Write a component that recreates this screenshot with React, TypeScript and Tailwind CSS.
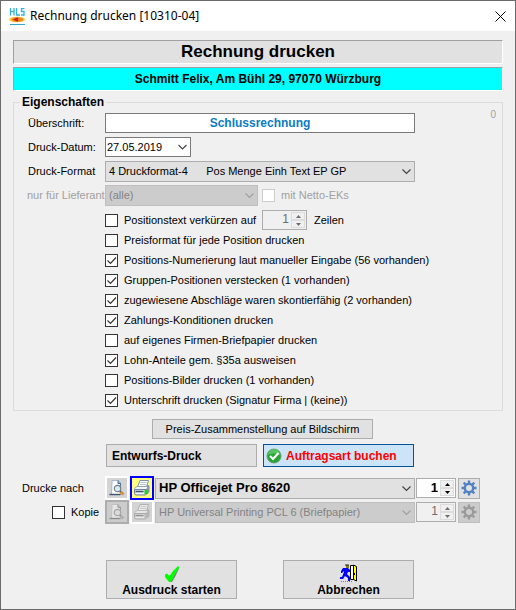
import { useState } from 'react';
import type { ReactNode } from 'react';

const printOptions = [
    { label: 'Preisformat für jede Position drucken', checked: false },
    { label: 'Positions-Numerierung laut manueller Eingabe (56 vorhanden)', checked: true },
    { label: 'Gruppen-Positionen verstecken (1 vorhanden)', checked: true },
    { label: 'zugewiesene Abschläge waren skontierfähig (2 vorhanden)', checked: true },
    { label: 'Zahlungs-Konditionen drucken', checked: true },
    { label: 'auf eigenes Firmen-Briefpapier drucken', checked: false },
    { label: 'Lohn-Anteile gem. §35a ausweisen', checked: true },
    { label: 'Positions-Bilder drucken (1 vorhanden)', checked: false },
    { label: 'Unterschrift drucken (Signatur Firma | (keine))', checked: true },
];

function Logo() {
    return (
        <svg className="h-[17px] w-4" viewBox="0 0 16 17" fill="none">
            <path d="M1.500 0v7.500M5 0v7.500M1.500 3.500H5M7.500 0v7H11M15.500 .500h-3v3h2.500v3.500h-3" stroke="#35b4d6" strokeWidth="1.300" />
            <ellipse cx="8" cy="11.500" rx="8" ry="2.800" fill="#f9d030" />
            <ellipse cx="8.500" cy="11.500" rx="6" ry="2.300" fill="#f08a1c" />
            <path d="M4 11.500l4.500-2.300 1 1.300-1 1 1 1-1 1.300z" fill="#d11c1c" />
            <path d="M1 16.500h15" stroke="#35a3cf" />
        </svg>
    );
}

function PreviewIcon() {
    return (
        <svg className="size-4" viewBox="0 0 16 16" fill="none">
            <path d="M3 .5h6.500l2 2.500v11.500H2.500z" fill="#fdfeff" stroke="#a3b8cc" />
            <path d="M9 .5V3.500h3" fill="#8fb2d6" stroke="#47678b" />
            <path d="M11.500 3.500v6" stroke="#5a7494" />
            <path d="M.5 14.500h11" stroke="#3e5470" strokeWidth="1.400" />
            <path d="M11 11.500l3.500 3" stroke="#d98a3a" strokeWidth="2.800" />
            <path d="M10.500 10.500l1.500 1.200" stroke="#5f5146" strokeWidth="1.500" />
            <circle cx="8.500" cy="8.500" r="3.200" fill="#d5ebf8" stroke="#75818c" strokeWidth="1.200" />
        </svg>
    );
}

function PrinterIcon() {
    return (
        <svg className="size-4" viewBox="0 0 16 16" fill="none">
            <path d="M6 .5h8.500l-2 6.500H3.500z" fill="#fff" stroke="#7b94ad" />
            <path d="M6.500 2.500h6M6 4.500h6" stroke="#b4c6d8" />
            <path d="M13 4l2.500 2v6l-3 3z" fill="#8796a6" />
            <path d="M.5 8.500L3 6.500h11l-1.500 3H.5z" fill="#f4f7fa" stroke="#93a3b3" />
            <path d="M.5 9.500h12V14l-1 1H1.500l-1-1.500z" fill="#d8e0e8" stroke="#74879a" />
            <path d="M1.500 11.500h8" stroke="#41566d" strokeWidth="1.400" />
            <path d="M2 13.500h8" stroke="#fff" />
            <path d="M10.500 10h3v4h-3z" fill="#24d324" />
        </svg>
    );
}

function GearIcon() {
    return (
        <svg className="size-4" viewBox="0 0 16 16" fill="none" stroke="currentColor">
            <circle cx="8" cy="8" r="4.200" strokeWidth="2.400" />
            <path d="M8 .5v2.500M8 13v2.500M.5 8h2.500M13 8h2.500M2.700 2.700l1.800 1.800M11.500 11.500l1.800 1.800M13.300 2.700l-1.800 1.800M4.500 11.500l-1.800 1.800" strokeWidth="2.400" />
        </svg>
    );
}

function OkBallIcon() {
    return (
        <svg className="size-4" viewBox="0 0 16 16" fill="none">
            <circle cx="8" cy="8" r="7" fill="#22a531" stroke="#6d9a70" />
            <path d="M2 7a6 6 0 0 1 12 0c-3-2-8-2-12 0z" fill="#55c35f" />
            <path d="M4 8l3 3 5.500-6" stroke="#fff" strokeWidth="2.200" />
        </svg>
    );
}

function GreenCheckIcon() {
    return (
        <svg className="h-4 w-4" viewBox="0 0 16 16">
            <path d="M2.500 9v3l4 4h1.500l3-5 4.500-9.500-1.500 1-5 7.500-1.500 2z" fill="#808080" />
            <path d="M1 8.500l2-1 2.500 2.500L9 5l4.500-4.500H15V2l-4.500 7L8 14.500 6.500 16H5L1 11z" fill="#00ff00" />
        </svg>
    );
}

function ExitIcon() {
    return (
        <svg className="h-[18px] w-[18px]" viewBox="0 0 18 18">
            <path d="M6 1h3v3H6z" fill="#8a7a28" />
            <path d="M5 0.500h4v1H5z" fill="#222" />
            <path d="M3 4h5l2 2v2H8l-1 2 3 3v4H8v-3l-3-2-2 3H0v-2h2l2-5V7L2 9H1V7z" fill="#0000ff" />
            <path d="M10.500 1.500h3v14h-3z" fill="#fff" stroke="#000" />
            <path d="M13.500 1l3 1.500v14.500l-3-1.500z" fill="#ffff00" stroke="#000" />
            <path d="M14 9h1v2h-1z" fill="#000" />
            <path d="M1 17.500h11" stroke="#808080" strokeDasharray="1 1" />
        </svg>
    );
}

interface CheckBoxProps {
    label: string;
    checked?: boolean;
    disabled?: boolean;
}

function CheckBox({ label, checked = false, disabled = false }: CheckBoxProps) {
    return (
        <label className="flex items-center gap-[6px] whitespace-nowrap has-disabled:text-[#a0a0a0]">
            <span className="grid shrink-0">
                <input
                    type="checkbox"
                    defaultChecked={checked}
                    disabled={disabled}
                    className="peer col-start-1 row-start-1 size-[13px] appearance-none border border-[#333] bg-white disabled:border-[#ccc]"
                />
                <svg className="pointer-events-none col-start-1 row-start-1 hidden size-[13px] peer-checked:block" viewBox="0 0 13 13" fill="none">
                    <path d="M2.500 6.500l3 3 5.500-6" stroke="#333" strokeWidth="1.200" />
                </svg>
            </span>
            {label}
        </label>
    );
}

function Chevron() {
    return (
        <svg className="pointer-events-none absolute top-0 right-1 h-full w-[9px]" viewBox="0 0 9 9" fill="none" stroke="currentColor">
            <path d="M.5 2.500l4 4 4-4" strokeWidth="1.200" />
        </svg>
    );
}

interface DropDownProps {
    id?: string;
    label?: string;
    value: string;
    disabled?: boolean;
    bold?: boolean;
}

function DropDown({ id, label, value, disabled = false, bold = false }: DropDownProps) {
    return (
        <div className={`relative min-w-0 flex-1 ${disabled ? 'text-[#a0a0a0]' : 'text-[#444]'}`}>
            <select
                id={id}
                aria-label={label}
                disabled={disabled}
                className={`block h-[21px] w-full appearance-none border border-[#adadad] bg-[#e1e1e1] pr-4 pl-[3px] whitespace-pre text-black disabled:border-[#bfbfbf] disabled:bg-[#ccc] disabled:text-[#838383] disabled:opacity-100 ${bold ? 'text-[13px] font-bold' : ''}`}
            >
                <option>{value}</option>
            </select>
            <Chevron />
        </div>
    );
}

interface SpinnerProps {
    label: string;
    width: string;
    disabled?: boolean;
    bold?: boolean;
}

function Spinner({ label, width, disabled = false, bold = false }: SpinnerProps) {
    const [count, setCount] = useState(1);
    const arrowClass = 'flex h-2 items-center justify-center border border-[#dcdcdc] bg-[#f0f0f0]';

    return (
        <div className={`flex h-5 items-center border border-[#adadad] pr-px ${width} ${disabled ? 'bg-[#f0f0f0] text-[#6d6d6d]' : 'bg-white text-black'}`}>
            <input
                type="number"
                aria-label={label}
                value={count}
                min={1}
                disabled={disabled}
                onChange={(ev) => setCount(Number(ev.target.value))}
                className={`h-full w-0 min-w-0 flex-1 [appearance:textfield] pr-[2px] pb-[2px] text-right [&::-webkit-inner-spin-button]:appearance-none ${bold ? 'text-[13px] font-bold' : 'text-xs'}`}
            />
            <span className="flex w-[14px] flex-col">
                <button type="button" aria-label="Mehr" disabled={disabled} className={arrowClass} onClick={() => setCount(count + 1)}>
                    <svg className="h-[3px] w-[5px]" viewBox="0 0 5 3"><path d="M0 3L2.500 0 5 3z" fill="currentColor" /></svg>
                </button>
                <button type="button" aria-label="Weniger" disabled={disabled} className={arrowClass} onClick={() => setCount(Math.max(1, count - 1))}>
                    <svg className="h-[3px] w-[5px]" viewBox="0 0 5 3"><path d="M0 0h5L2.500 3z" fill="currentColor" /></svg>
                </button>
            </span>
        </div>
    );
}

interface ToolButtonProps {
    label: string;
    className: string;
    disabled?: boolean;
    children: ReactNode;
}

function ToolButton({ label, className, disabled = false, children }: ToolButtonProps) {
    return (
        <button
            type="button"
            aria-label={label}
            disabled={disabled}
            className={`flex shrink-0 items-center justify-center ${className}`}
        >
            {children}
        </button>
    );
}

export default function App() {
    return (
        <div className="flex min-h-screen flex-col border border-[#6b6b6b] bg-[#f0f0f0] font-['Liberation_Sans',Arial,sans-serif] text-[11px] leading-4 text-black">
            <header className="flex h-[30px] items-center gap-[5px] bg-white pr-[9px] pl-2 font-['Noto_Sans',sans-serif] text-xs">
                <Logo />
                <h1 className="flex-1">Rechnung drucken [10310-04]</h1>
                <button type="button" aria-label="Schließen">
                    <svg className="size-[11px]" viewBox="0 0 11 11" stroke="#000">
                        <path d="M.5.5l10 10M10.500.5l-10 10" />
                    </svg>
                </button>
            </header>

            <main className="px-3 pt-[9px] pb-2">
                <h2 className="flex h-6 items-center justify-center border border-t-[#a0a0a0] border-r-white border-b-white border-l-[#a0a0a0] bg-[#e1e1e1] text-[17px] font-bold">
                    Rechnung drucken
                </h2>
                <p className="mt-[3px] flex h-6 items-center justify-center border border-t-[#a0a0a0] border-r-white border-b-white border-l-[#a0a0a0] bg-[#00ffff] text-xs font-bold">
                    Schmitt Felix, Am Bühl 29, 97070 Würzburg
                </p>

                <fieldset className="relative mt-[2px] min-w-0 border border-[#dcdcdc] pr-[87px] pl-[14px]">
                    <legend className="-ml-2 h-[18px] px-[2px] text-xs leading-[18px] font-bold">
                        Eigenschaften
                    </legend>
                    <span className="absolute -top-1 right-[6px] text-[10px] text-[#a0a0a0]">0</span>

                    <div className="grid auto-rows-[24px] grid-cols-[77px_minmax(0,1fr)] items-center whitespace-nowrap">
                        <label htmlFor="ueberschrift">Überschrift:</label>
                        <input
                            id="ueberschrift"
                            defaultValue="Schlussrechnung"
                            className="h-5 border border-[#7a7a7a] bg-white text-center text-xs font-bold text-[#0a7cc4]"
                        />

                        <label htmlFor="datum">Druck-Datum:</label>
                        <div className="relative w-[86px] text-[#444]">
                            <input
                                id="datum"
                                defaultValue="27.05.2019"
                                className="block h-5 w-full border border-[#7a7a7a] bg-white pl-px text-black"
                            />
                            <Chevron />
                        </div>

                        <label htmlFor="format">Druck-Format</label>
                        <DropDown id="format" value={'4 Druckformat-4\u00a0\u00a0\u00a0\u00a0\u00a0\u00a0Pos Menge Einh Text EP GP'} />

                        <label htmlFor="lieferant" className="-ml-px text-[#a0a0a0]">nur für Lieferant</label>
                        <div className="flex items-center gap-1">
                            <DropDown id="lieferant" value="(alle)" disabled />
                            <div className="w-[153px]">
                                <CheckBox label="mit Netto-EKs" disabled />
                            </div>
                        </div>
                    </div>

                    <div className="mt-[3px] flex flex-col pl-[77px]">
                        <div className="flex h-5 items-center">
                            <div className="w-[157px]">
                                <CheckBox label="Positionstext verkürzen auf" />
                            </div>
                            <Spinner label="Zeilen" width="w-[45px]" disabled />
                            <span className="ml-[7px]">Zeilen</span>
                        </div>
                        {printOptions.map((option) => (
                            <div key={option.label} className="flex h-5 items-center">
                                <CheckBox label={option.label} checked={option.checked} />
                            </div>
                        ))}
                    </div>
                </fieldset>

                <div className="mt-2 flex pr-[130px] pl-[139px]">
                    <button type="button" className="h-5 flex-1 border border-[#adadad] bg-[#e1e1e1] whitespace-nowrap">
                        Preis-Zusammenstellung auf Bildschirm
                    </button>
                </div>

                <div className="mt-[5px] grid grid-cols-2 gap-[6px] pr-[89px] pl-[93px] text-xs font-bold whitespace-nowrap">
                    <button type="button" className="h-[23px] border border-[#adadad] bg-[#e1e1e1] pl-[5px] text-left">
                        Entwurfs-Druck
                    </button>
                    <button type="button" className="flex h-[23px] items-center gap-1 border border-[#005499] bg-[#cce4f7] pl-[2px] text-[#ff0000]">
                        <OkBallIcon />
                        Auftragsart buchen
                    </button>
                </div>

                <div className="mt-[9px] pr-[23px] pl-[9px]">
                    <div className="flex h-6 items-center">
                        <span className="w-[83px]">Drucke nach</span>
                        <ToolButton label="Vorschau" className="size-6 border-2 border-white bg-[#d4d4d4]">
                            <PreviewIcon />
                        </ToolButton>
                        <ToolButton label="Drucker" className="ml-px size-6 border-2 border-[#0000ff] bg-[#ffff80]">
                            <PrinterIcon />
                        </ToolButton>
                        <div className="ml-px flex flex-1">
                            <DropDown label="Drucke nach" value="HP Officejet Pro 8620" bold />
                        </div>
                        <div className="ml-px">
                            <Spinner label="Anzahl" width="w-10" bold />
                        </div>
                        <ToolButton label="Einstellungen" className="ml-[2px] h-[21px] w-[22px] border border-[#adadad] bg-[#e1e1e1] text-[#4f81c4]">
                            <GearIcon />
                        </ToolButton>
                    </div>
                    <div className="flex h-6 items-center">
                        <div className="w-[83px] pl-[30px]">
                            <CheckBox label="Kopie" />
                        </div>
                        <ToolButton label="Vorschau Kopie" className="size-6 border-2 border-[#adadad] bg-[#ccc] [&_svg]:opacity-50 [&_svg]:grayscale" disabled>
                            <PreviewIcon />
                        </ToolButton>
                        <ToolButton label="Drucker Kopie" className="ml-px size-6 border-2 border-white bg-[#d4d4d4] [&_svg]:opacity-50 [&_svg]:grayscale" disabled>
                            <PrinterIcon />
                        </ToolButton>
                        <div className="ml-px flex flex-1">
                            <DropDown label="Kopie drucken nach" value="HP Universal Printing PCL 6 (Briefpapier)" disabled />
                        </div>
                        <div className="ml-px">
                            <Spinner label="Anzahl Kopien" width="w-10" disabled />
                        </div>
                        <ToolButton label="Einstellungen Kopie" className="ml-[2px] h-[21px] w-[22px] border border-[#bfbfbf] bg-[#ccc] text-[#9a9a9a]" disabled>
                            <GearIcon />
                        </ToolButton>
                    </div>
                </div>

                <div className="mt-9 grid grid-cols-2 gap-[46px] pr-[89px] pl-[93px] text-xs font-bold whitespace-nowrap">
                    <button type="button" className="flex h-[39px] flex-col items-center justify-end border border-[#adadad] bg-[#e1e1e1]">
                        <GreenCheckIcon />
                        Ausdruck starten
                    </button>
                    <button type="button" className="flex h-[39px] flex-col items-center justify-end border border-[#adadad] bg-[#e1e1e1]">
                        <ExitIcon />
                        Abbrechen
                    </button>
                </div>
            </main>
        </div>
    );
}
